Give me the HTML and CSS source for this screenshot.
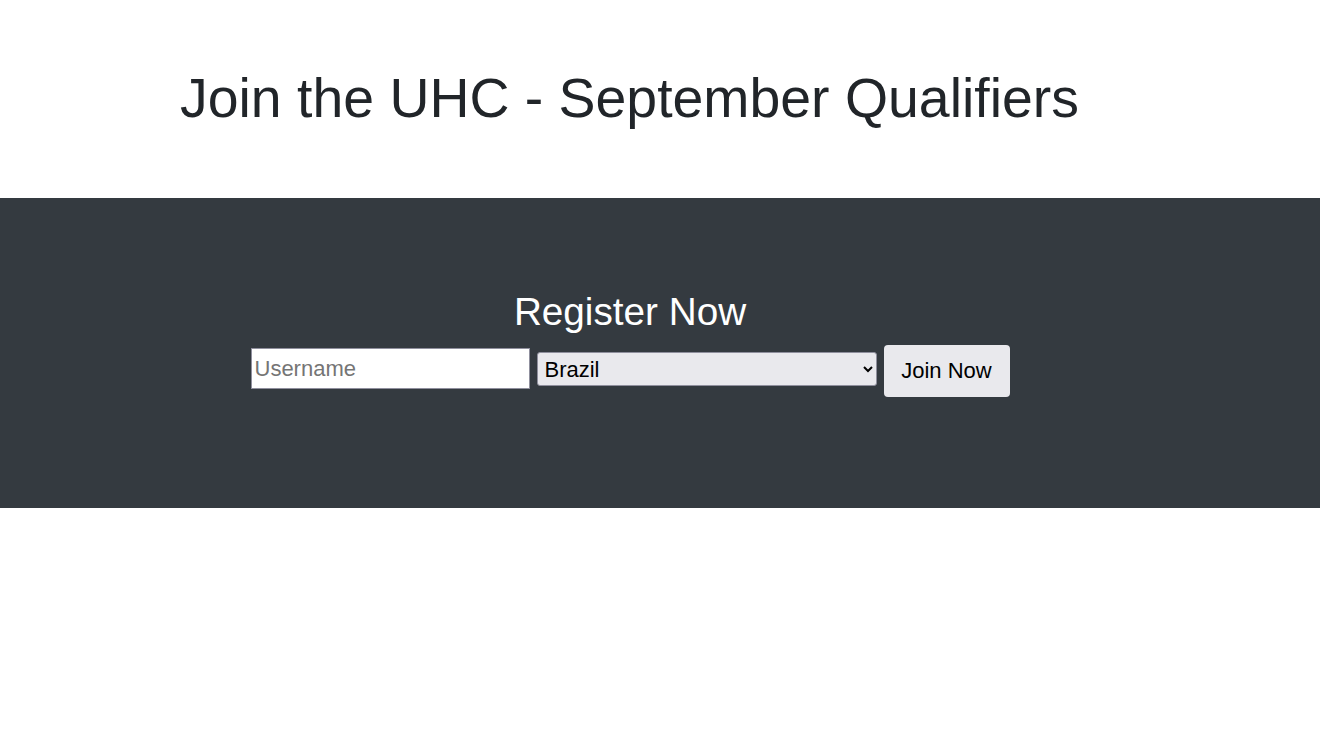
FILE: index.html
```html
<!DOCTYPE html>
<html lang="en">
<head>
<meta charset="utf-8">
<title>Join the UHC - September Qualifiers</title>
<link rel="stylesheet" href="styles.css">
</head>
<body>
<header class="hero">
  <h1 class="title">Join the UHC - September Qualifiers</h1>
</header>
<section class="band">
  <div class="band-inner">
    <h2 class="band-title">Register Now</h2>
    <form class="reg-form">
      <input class="field-input" type="text" placeholder="Username">
      <select class="field-select">
        <option>Brazil</option>
      </select>
      <button class="join-btn" type="button">Join Now</button>
    </form>
  </div>
</section>
</body>
</html>
```
FILE: styles.css
```css
html, body {
  margin: 0;
  padding: 0;
  background: #ffffff;
}
body {
  font-family: "Liberation Sans", Arial, sans-serif;
  color: #212529;
}
.hero {
  height: 198px;
  box-sizing: border-box;
  padding: 65px 0 0 180px;
}
.title {
  margin: 0;
  font-size: 55.4px;
  font-weight: 400;
  line-height: 67px;
  color: #212529;
}
.band {
  background: #343a40;
  height: 310px;
  box-sizing: border-box;
  padding-top: 90px;
}
.band-inner {
  width: 1260px;
  text-align: center;
}
.band-title {
  margin: 0 0 12px;
  font-size: 38.7px;
  font-weight: 400;
  line-height: 48px;
  color: #ffffff;
}
.reg-form {
  display: flex;
  justify-content: center;
  align-items: flex-start;
  gap: 7px;
}
.field-input {
  box-sizing: border-box;
  width: 279px;
  height: 41px;
  border: 1px solid #8f8f9d;
  border-radius: 0;
  padding: 0 3px;
  font-family: "Liberation Sans", Arial, sans-serif;
  font-size: 22px;
  color: #212529;
  background: #ffffff;
}
.field-input::placeholder {
  color: #757575;
}
.field-select {
  box-sizing: border-box;
  width: 340px;
  height: 34px;
  margin-top: 4px;
  border: 1px solid #8f8f9d;
  border-radius: 3px;
  padding: 0 3px;
  font-family: "Liberation Sans", Arial, sans-serif;
  font-size: 22px;
  color: #000000;
  background: #e9e9ed;
}
.join-btn {
  box-sizing: border-box;
  width: 126px;
  height: 52px;
  margin-top: -3px;
  border: none;
  border-radius: 4px;
  padding: 0;
  font-family: "Liberation Sans", Arial, sans-serif;
  font-size: 22px;
  color: #000000;
  background: #e9e9ed;
}
```
